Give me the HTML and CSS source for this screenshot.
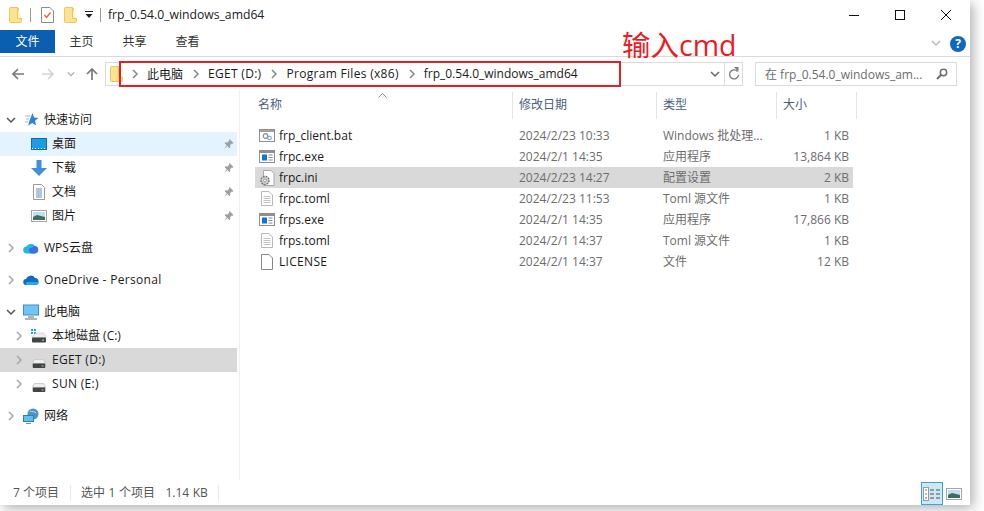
FILE: index.html
```html
<!DOCTYPE html>
<html lang="zh">
<head>
<meta charset="utf-8">
<title>frp_0.54.0_windows_amd64</title>
<link rel="stylesheet" href="styles.css">
</head>
<body>
<svg class="defs" width="0" height="0">
  <defs>
    <symbol id="folder" viewBox="0 0 13 16"><path d="M.5 1.500a1 1 0 0 1 1-1h7l1 1v10h3v3a1 1 0 0 1-1 1h-10a1 1 0 0 1-1-1z" fill="#fde28f" stroke="#e8c860"/><path d="M8.500.5v11h4" fill="#fff3c4" stroke="#e8c860"/></symbol>
    <symbol id="pin" viewBox="0 0 12 12"><path d="M7 .5l4.500 4.500-1 .7-.8-.3-2 2 .2 2.200-.9.900-2.200-2.300L1 11.500l3-4.200L1.800 5.100l.9-.9 2.100.2 2-2-.3-.8z" fill="#9aa0a6"/></symbol>
    <symbol id="exe" viewBox="0 0 16 13"><rect x=".5" y=".5" width="15" height="12" fill="#fff" stroke="#8f8f8f"/><rect x="1" y="1" width="14" height="2" fill="#8f8f8f"/><rect x="3" y="4.500" width="5" height="6" fill="#0a78d4"/><path d="M9.500 5h4M9.500 7.500h4M9.500 10h4" stroke="#888"/></symbol>
    <symbol id="doc" viewBox="0 0 12 15"><path d="M.5.500h7.500l3.500 3.500v10.500H.5z" fill="#fff" stroke="#b8b8b8"/><path d="M2.500 5.500h7M2.500 7.500h7M2.500 9.500h7M2.500 11.500h7" stroke="#c4c4c4"/></symbol>
    <symbol id="drive" viewBox="0 0 16 10"><path d="M3 .5h10l2.500 4.500h-15z" fill="#eeeeee" stroke="#c6c6c6"/><rect x="1" y="5" width="14" height="5" rx="1" fill="#444"/><rect x="11" y="7" width="2" height="1.500" fill="#5bd35b"/></symbol>
    <symbol id="photo" viewBox="0 0 16 12"><rect x=".5" y=".5" width="15" height="11" fill="#fff" stroke="#a5a5a5"/><rect x="2" y="2" width="12" height="8" fill="#bfe0f2"/><path d="M2 7l4-2 8 2v3H2z" fill="#3f6d60"/></symbol>
    <symbol id="chev-r" viewBox="0 0 8 10"><path d="M2 1l4 4-4 4" fill="none" stroke="currentColor" stroke-width="1.500"/></symbol>
    <symbol id="chev-d" viewBox="0 0 10 8"><path d="M1 2l4 4 4-4" fill="none" stroke="currentColor" stroke-width="1.500"/></symbol>
  </defs>
</svg>

<div class="window">
  <header class="titlebar">
    <svg class="qa-folder"><use href="#folder"/></svg>
    <span class="qa-sep"></span>
    <svg class="qa-props" viewBox="0 0 13 16"><path d="M.5.500h8.500l3.500 3.500v11.500H.5z" fill="#fff" stroke="#8d8d8d"/><path d="M3.500 8l2 2.500 4-5" fill="none" stroke="#e2632c" stroke-width="1.300"/></svg>
    <svg class="qa-folder"><use href="#folder"/></svg>
    <svg class="qa-menu" viewBox="0 0 8 7"><path d="M0 0h8v1H0z" fill="#222"/><path d="M.500 3h7L4 7z" fill="#222"/></svg>
    <span class="qa-sep"></span>
    <span class="title-text">frp_0.54.0_windows_amd64</span>
    <div class="win-buttons">
      <svg class="win-btn" viewBox="0 0 12 12"><path d="M1 6.500h10" stroke="#111"/></svg>
      <svg class="win-btn" viewBox="0 0 12 12"><rect x="1.500" y="1.500" width="9" height="9" fill="none" stroke="#111"/></svg>
      <svg class="win-btn" viewBox="0 0 12 12"><path d="M1 1l10 10M11 1L1 11" stroke="#111"/></svg>
    </div>
  </header>

  <nav class="ribbon">
    <span class="tab tab-file">文件</span>
    <span class="tab">主页</span>
    <span class="tab">共享</span>
    <span class="tab">查看</span>
    <svg class="ribbon-chev"><use href="#chev-d"/></svg>
    <span class="help">?</span>
  </nav>

  <div class="addressbar">
    <svg class="nav-icon nav-back" viewBox="0 0 14 14"><path d="M13 7H2M7 2L2 7l5 5" fill="none" stroke="#7a7a7a" stroke-width="1.700"/></svg>
    <svg class="nav-icon nav-fwd" viewBox="0 0 14 14"><path d="M1 7h11M7 2l5 5-5 5" fill="none" stroke="#d4d4d4" stroke-width="1.700"/></svg>
    <svg class="nav-down"><use href="#chev-d"/></svg>
    <svg class="nav-icon nav-up" viewBox="0 0 14 14"><path d="M7 13V2M2 7l5-5 5 5" fill="none" stroke="#7a7a7a" stroke-width="1.700"/></svg>
    <div class="path-box">
      <svg class="path-folder"><use href="#folder"/></svg>
      <svg class="crumb-sep"><use href="#chev-r"/></svg><span class="crumb">此电脑</span>
      <svg class="crumb-sep"><use href="#chev-r"/></svg><span class="crumb wide">EGET (D:)</span>
      <svg class="crumb-sep"><use href="#chev-r"/></svg><span class="crumb wide">Program Files (x86)</span>
      <svg class="crumb-sep"><use href="#chev-r"/></svg><span class="crumb">frp_0.54.0_windows_amd64</span>
      <span class="path-fill"></span>
      <svg class="path-drop"><use href="#chev-d"/></svg>
      <span class="path-refresh">
        <svg viewBox="0 0 12 14" width="12" height="14"><path d="M9.500 4.500A4.500 4.500 0 1 0 10.500 8" fill="none" stroke="#7c7c7c" stroke-width="1.400"/><path d="M6 0l4.500 0v4.800z" fill="#7c7c7c"/></svg>
      </span>
    </div>
    <div class="search-box">
      <span class="search-text">在 frp_0.54.0_windows_am...</span>
      <svg viewBox="0 0 12 12" width="12" height="12"><circle cx="7.500" cy="4.500" r="3.200" fill="none" stroke="#6f6f6f" stroke-width="1.500"/><path d="M5.200 6.800L1 11" stroke="#6f6f6f" stroke-width="2"/></svg>
    </div>
  </div>

  <div class="main">
    <aside class="sidebar">
      <div class="tree-row">
        <svg class="tw tw-open"><use href="#chev-d"/></svg>
        <svg class="ico" viewBox="0 0 16 16"><path d="M9.500 1l1.600 4.600 4.400.3-3.500 2.900 1.200 4.700-4-2.600-4 2.600 1.200-4.700z" fill="#2d84d8"/><path d="M2 4h5M3 7h3M2 10h3" stroke="#8dbce8"/></svg>
        <span>快速访问</span>
      </div>
      <div class="tree-row sub hovered">
        <svg class="ico" viewBox="0 0 16 12"><rect x=".5" y=".5" width="15" height="11" fill="#1b9ce8" stroke="#0d6fb0"/><path d="M1 10.500h14" stroke="#fff" stroke-dasharray="1 2"/></svg>
        <span>桌面</span><svg class="pin"><use href="#pin"/></svg>
      </div>
      <div class="tree-row sub">
        <svg class="ico" viewBox="0 0 16 16"><path d="M5.500 0h5v8H16l-8 8-8-8h5.500z" fill="#3f8fdd"/></svg>
        <span>下载</span><svg class="pin"><use href="#pin"/></svg>
      </div>
      <div class="tree-row sub">
        <svg class="ico" viewBox="0 0 16 16"><path d="M2.500.5h8l3 3v12h-11z" fill="#fff" stroke="#9a9a9a"/><path d="M5 5h6M5 7h6M5 9h6M5 11h6M5 13h6" stroke="#5a8fbe"/></svg>
        <span>文档</span><svg class="pin"><use href="#pin"/></svg>
      </div>
      <div class="tree-row sub">
        <svg class="ico"><use href="#photo"/></svg>
        <span>图片</span><svg class="pin"><use href="#pin"/></svg>
      </div>
      <div class="tree-row group-gap">
        <svg class="tw"><use href="#chev-r"/></svg>
        <svg class="ico" viewBox="0 0 16 12"><path d="M4 11.500a3.500 3.500 0 0 1-.5-7A5 5 0 0 1 12 4a3.800 3.800 0 0 1 0 7.500z" fill="#22b8e6"/><path d="M9 11.500a3 3 0 0 1 0-6 3 3 0 0 1 3-1.500 3.800 3.800 0 0 1 0 7.500z" fill="#3f6fe8"/></svg>
        <span>WPS云盘</span>
      </div>
      <div class="tree-row group-gap">
        <svg class="tw"><use href="#chev-r"/></svg>
        <svg class="ico" viewBox="0 0 16 11"><path d="M3.500 10.500a3 3 0 0 1-.5-6A5 5 0 0 1 12 3.500a3.500 3.500 0 0 1 0 7z" fill="#0f6cc4"/><path d="M3.500 10.500a2.500 2.500 0 0 1 0-3h12.400a3 3 0 0 1-3.500 3z" fill="#28a8ea"/></svg>
        <span class="wide">OneDrive - Personal</span>
      </div>
      <div class="tree-row group-gap">
        <svg class="tw tw-open"><use href="#chev-d"/></svg>
        <svg class="ico" viewBox="0 0 16 15"><rect x=".5" y=".5" width="15" height="10" fill="#6fc6f4" stroke="#3b8fc5"/><path d="M5 12.500h6M2 14.500h12" stroke="#9a9a9a" stroke-width="1.400"/></svg>
        <span>此电脑</span>
      </div>
      <div class="tree-row sub">
        <svg class="tw tw-sub"><use href="#chev-r"/></svg>
        <svg class="ico drive-win" viewBox="0 0 16 14"><path d="M0 0h2v2H0zM3 0h2v2H3zM0 3h2v2H0zM3 3h2v2H3z" fill="#19a5ea"/><path d="M5 4h8l2.500 4.500h-15z" fill="#eeeeee" stroke="#c6c6c6" stroke-width=".6"/><rect x="1" y="8.500" width="14" height="5" rx="1" fill="#444"/><rect x="11" y="10.500" width="2" height="1.500" fill="#5bd35b"/></svg>
        <span>本地磁盘 (C:)</span>
      </div>
      <div class="tree-row sub selected">
        <svg class="tw tw-sub"><use href="#chev-r"/></svg>
        <svg class="ico drive"><use href="#drive"/></svg>
        <span class="wide">EGET (D:)</span>
      </div>
      <div class="tree-row sub">
        <svg class="tw tw-sub"><use href="#chev-r"/></svg>
        <svg class="ico drive"><use href="#drive"/></svg>
        <span class="wide">SUN (E:)</span>
      </div>
      <div class="tree-row group-gap">
        <svg class="tw"><use href="#chev-r"/></svg>
        <svg class="ico" viewBox="0 0 16 16"><circle cx="10" cy="6" r="5.500" fill="#4b95c9"/><path d="M7 3c2 1 5 0 6 2" stroke="#b9dcf1" fill="none"/><rect x=".5" y="7.500" width="10" height="6" fill="#65bdf0" stroke="#2f7fb3"/><path d="M3 15.500h5" stroke="#888"/></svg>
        <span>网络</span>
      </div>
    </aside>

    <section class="list">
      <div class="list-head">
        <span class="sort-arrow"><svg viewBox="0 0 9 5" width="9" height="5"><path d="M.5 4.500l4-4 4 4" fill="none" stroke="#8a8a8a"/></svg></span>
        <span class="hcol h-name">名称</span>
        <span class="hcol h-date">修改日期</span>
        <span class="hcol h-type">类型</span>
        <span class="hcol h-size">大小</span>
      </div>
      <div class="rows">
        <div class="row">
          <span class="c-name"><svg class="fico" viewBox="0 0 16 13"><rect x=".5" y=".5" width="15" height="12" fill="#fff" stroke="#8f8f8f"/><rect x="1" y="1" width="14" height="2" fill="#a0a0a0"/><circle cx="6.500" cy="7" r="2.300" fill="none" stroke="#8a8a8a" stroke-width="1.200"/><circle cx="10.500" cy="9" r="1.800" fill="none" stroke="#7aa5c8" stroke-width="1.100"/></svg><b>frp_client.bat</b></span>
          <span class="c-date">2024/2/23 10:33</span><span class="c-type">Windows 批处理...</span><span class="c-size">1 KB</span>
        </div>
        <div class="row">
          <span class="c-name"><svg class="fico"><use href="#exe"/></svg><b>frpc.exe</b></span>
          <span class="c-date">2024/2/1 14:35</span><span class="c-type">应用程序</span><span class="c-size">13,864 KB</span>
        </div>
        <div class="row row-selected">
          <span class="c-name"><svg class="fico fico-tall" viewBox="0 0 16 16"><path d="M4.500.5h7.500l3 3v12H4.500z" fill="#fff" stroke="#a8a8a8"/><circle cx="6" cy="10.500" r="4" fill="#d6d6d6" stroke="#767676" stroke-dasharray="1.800 .9" stroke-width="1.500"/><circle cx="6" cy="10.500" r="1.400" fill="#fff" stroke="#767676" stroke-width=".7"/></svg><b>frpc.ini</b></span>
          <span class="c-date">2024/2/23 14:27</span><span class="c-type">配置设置</span><span class="c-size">2 KB</span>
        </div>
        <div class="row">
          <span class="c-name"><svg class="fico fico-doc"><use href="#doc"/></svg><b>frpc.toml</b></span>
          <span class="c-date">2024/2/23 11:53</span><span class="c-type">Toml 源文件</span><span class="c-size">1 KB</span>
        </div>
        <div class="row">
          <span class="c-name"><svg class="fico"><use href="#exe"/></svg><b>frps.exe</b></span>
          <span class="c-date">2024/2/1 14:35</span><span class="c-type">应用程序</span><span class="c-size">17,866 KB</span>
        </div>
        <div class="row">
          <span class="c-name"><svg class="fico fico-doc"><use href="#doc"/></svg><b>frps.toml</b></span>
          <span class="c-date">2024/2/1 14:37</span><span class="c-type">Toml 源文件</span><span class="c-size">1 KB</span>
        </div>
        <div class="row">
          <span class="c-name"><svg class="fico fico-doc fico-plain" viewBox="0 0 12 16"><path d="M.5.500h7.500l3.500 3.500v11.500H.5z" fill="#fff" stroke="#8a8a8a"/></svg><b class="wide">LICENSE</b></span>
          <span class="c-date">2024/2/1 14:37</span><span class="c-type">文件</span><span class="c-size">12 KB</span>
        </div>
      </div>
    </section>
  </div>

  <footer class="statusbar">
    <span class="st-count">7 个项目</span>
    <span class="st-sel">选中 1 个项目&nbsp;&nbsp;&nbsp;1.14 KB</span>
    <span class="st-views">
      <span class="view-btn active">
        <svg viewBox="0 0 18 14" width="18" height="14"><rect x=".5" y=".5" width="5" height="13" fill="#fff" stroke="#999"/><path d="M2 3h2M2 7h2" stroke="#777"/><path d="M2 11h2" stroke="#c33"/><path d="M7 3h4M13 3h4M7 7h4M13 7h4M7 11h4M13 11h4" stroke="#808080" stroke-width="1.300"/></svg>
      </span>
      <span class="view-btn">
        <svg class="view-photo"><use href="#photo"/></svg>
      </span>
    </span>
  </footer>

  <div class="annot-box"></div>
  <div class="annot-text">输入cmd</div>
</div>
</body>
</html>
```

FILE: styles.css
```css
* { box-sizing: border-box; }
html, body { margin: 0; padding: 0; height: 100%; background: #fff; overflow: hidden; }
body { font-family: "Open Sans", "Noto Sans CJK SC", sans-serif; font-size: 12px; color: #1a1a1a; }
.defs { display: block; height: 0; }
svg { display: block; flex: none; }
.wide { letter-spacing: .3px; }

.window {
  position: relative;
  width: 970px;
  height: 505px;
  background: #fff;
  display: flex;
  flex-direction: column;
  box-shadow: 3px 3px 12px rgba(0, 0, 0, .32);
}

/* title bar */
.titlebar { height: 30px; flex: none; display: flex; align-items: center; padding: 0 0 1px 9px; }
.qa-folder { width: 13px; height: 16px; }
.qa-sep { width: 1px; height: 14px; background: #9b9b9b; margin: 0 10px 0 8px; }
.qa-props { width: 13px; height: 16px; margin-right: 10px; }
.qa-menu { width: 8px; height: 7px; margin-left: 8px; }
.qa-menu + .qa-sep { margin: 0 7px 0 7px; }
.title-text { font-size: 12.200px; color: #222; }
.win-buttons { margin-left: auto; display: flex; align-items: center; gap: 34px; padding-right: 18px; }
.win-btn { width: 12px; height: 12px; }

/* ribbon tabs */
.ribbon { height: 27px; flex: none; display: flex; align-items: flex-start; border-bottom: 1px solid #dadbdc; padding-right: 4px; }
.tab { width: 53px; height: 23px; line-height: 24px; text-align: center; color: #333; }
.tab-file { width: 55px; background: #0a5fb0; color: #fff; }
.ribbon-chev { width: 10px; height: 8px; margin: 9px 9px 0 auto; color: #b4b8bd; }
.help { width: 16px; height: 16px; margin-top: 6px; border-radius: 50%; background: #0e68c0; color: #fff; font-weight: 700; font-size: 12px; line-height: 16px; text-align: center; }

/* address bar */
.addressbar { height: 33px; flex: none; display: flex; align-items: center; padding: 0 13px 0 11px; }
.nav-icon { width: 14px; height: 14px; }
.nav-fwd { margin-left: 16px; }
.nav-down { width: 8px; height: 8px; margin-left: 12px; color: #a8a8a8; }
.nav-up { margin-left: 10px; }
.path-box { margin-left: 6px; flex: 1; height: 24px; display: flex; align-items: center; border: 1px solid #dcdcdc; padding-left: 4px; }
.path-folder { width: 13px; height: 16px; }
.crumb-sep { width: 8px; height: 10px; color: #888; margin: 0 8px; }
.crumb { color: #1a1a1a; margin-right: 1px; }
.path-fill { flex: 1; }
.path-drop { width: 10px; height: 8px; color: #666; margin-right: 4px; }
.path-refresh { width: 18px; height: 22px; border-left: 1px solid #dcdcdc; display: flex; align-items: center; justify-content: center; }
.search-box { width: 202px; height: 24px; margin-left: 12px; border: 1px solid #dcdcdc; display: flex; align-items: center; justify-content: space-between; padding: 0 8px 0 9px; }
.search-text { color: #6d6d6d; }

/* body */
.main { flex: 1; min-height: 0; display: flex; }
.sidebar { width: 240px; flex: none; border-right: 1px solid #eef0f2; padding-top: 18px; }
.tree-row { height: 24px; width: 237px; display: flex; align-items: center; padding-left: 7px; position: relative; line-height: 24px; }
.tree-row.sub { padding-left: 31px; }
.tree-row.group-gap { margin-top: 8px; }
.hovered { background: #e5f3ff; }
.selected { background: #d9d9d9; }
.tw { width: 8px; height: 10px; color: #a6a6a6; margin-right: 8px; }
.tw-open { width: 10px; height: 8px; color: #555; margin: 0 7px 0 -1px; }
.tree-row.sub:has(.tw) { padding-left: 15px; }
.tree-row .ico { width: 16px; height: 16px; margin-right: 5px; }
.tree-row .drive { height: 9px; margin-top: 6px; }
.pin { position: absolute; right: 3px; top: 6px; width: 11px; height: 12px; }

/* file list */
.list { flex: 1; min-width: 0; padding: 2px 0 0 11px; }
.list-head { position: relative; display: flex; height: 27px; margin-bottom: 6px; }
.sort-arrow { position: absolute; left: 127px; top: 1px; }
.hcol { display: block; height: 27px; line-height: 26px; padding-left: 7px; border-right: 1px solid #e5e5e5; color: #4c607a; }
.h-name { width: 262px; }
.h-date { width: 144px; padding-left: 6px; }
.h-type { width: 120px; padding-left: 6px; }
.h-size { width: 80px; padding-left: 6px; }

.rows { margin-left: 4px; width: 598px; }
.row { display: grid; grid-template-columns: 264px 144px 110px 76px; height: 21px; line-height: 21px; color: #6d6d6d; }
.row-selected { background: #d9d9d9; }
.c-name { display: flex; align-items: center; color: #1a1a1a; padding-left: 4px; }
.c-name b { font-weight: 400; }
.fico { width: 16px; height: 13px; margin-right: 4px; }
.fico-tall { height: 16px; }
.fico-doc { width: 12px; height: 15px; margin-left: 2px; margin-right: 6px; }
.fico-plain { height: 16px; }
.c-size { text-align: right; }

/* status bar */
.statusbar { height: 25px; flex: none; display: flex; align-items: center; padding-left: 13px; color: #555; }
.st-count { width: 58px; height: 16px; line-height: 16px; border-right: 1px solid #e8e8e8; margin-right: 10px; }
.st-sel { width: 138px; height: 16px; line-height: 16px; border-right: 1px solid #e8e8e8; word-spacing: .4px; }
.st-views { margin-left: auto; display: flex; align-items: flex-end; height: 25px; padding-right: 5px; }
.view-btn { width: 22px; height: 23px; display: flex; align-items: center; justify-content: center; }
.view-btn.active { background: #cce8f7; border: 1px solid #3aa3dc; }
.view-photo { width: 16px; height: 12px; }

/* red annotations over the window */
.annot-box { position: absolute; left: 119px; top: 61px; width: 502px; height: 26px; border: 2px solid #ec1c24; }
.annot-text { position: absolute; left: 622px; top: 26px; color: #ec1c24; font-size: 28.500px; line-height: 38px; }
```
